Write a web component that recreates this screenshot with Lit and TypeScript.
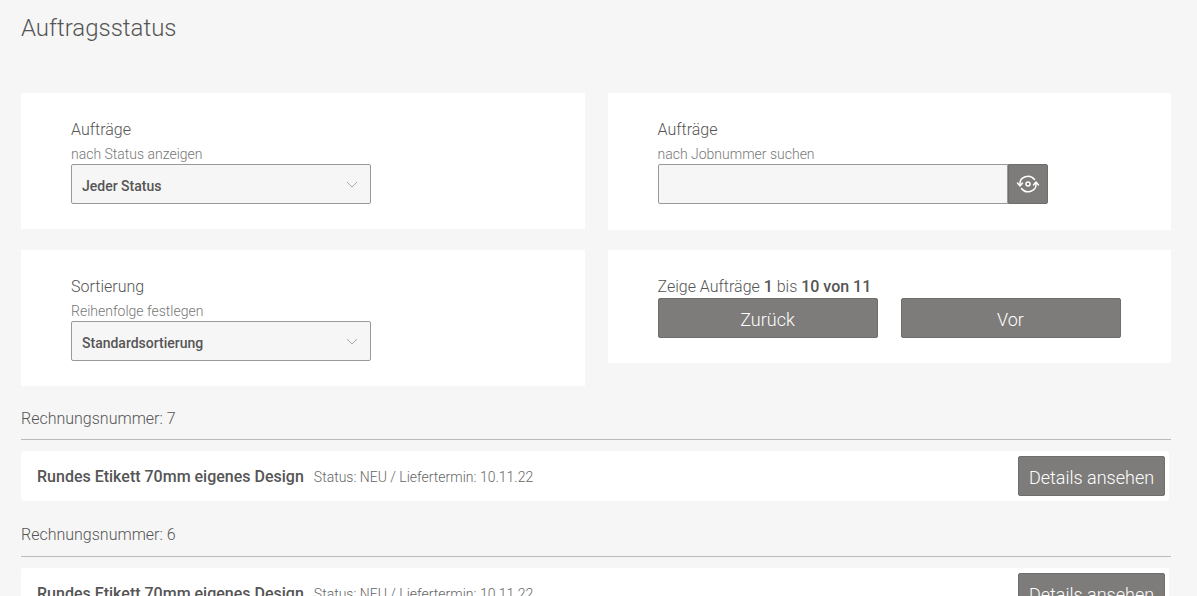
import { LitElement, html, css } from "lit";
import { customElement } from "lit/decorators.js";

const chevron = html`<svg class="chev" width="12" height="7" viewBox="0 0 12 7" fill="none" stroke="#a8a8a8" stroke-width="1"><path d="M1 1l5 5 5-5"/></svg>`;

@customElement("app-root")
export class AppRoot extends LitElement {
  static styles = css`
    :host { display: block; height: 596px; overflow: hidden; background: #f6f6f6; font-family: Roboto, sans-serif; color: #555; box-sizing: border-box; padding: 0 26px 0 21px; }
    * { box-sizing: border-box; }
    h1 { margin: 0; padding-top: 13px; height: 93px; font-size: 24px; line-height: 30px; font-weight: 300; color: #555; }
    .grid { display: grid; grid-template-columns: 564px 563.5px; column-gap: 22.5px; align-items: start; }
    .col { display: flex; flex-direction: column; }
    .left { gap: 21px; }
    .right { gap: 20px; }
    .card { background: #fff; padding: 27px 50px 0; }
    .h136 { height: 136px; }
    .h137 { height: 137px; }
    .h113 { height: 113px; }
    .title { font-size: 16px; line-height: 20px; font-weight: 300; color: #555; }
    .sub { font-size: 14px; line-height: 16px; margin-top: 6px; margin-bottom: 2px; font-weight: 300; color: #777; height: 16px; }
    .select { width: 300px; height: 40px; background: #f6f6f6; border: 1px solid #999; border-radius: 2px; display: flex; align-items: center; justify-content: space-between; padding: 4px 12px 0 10px; font-size: 14px; font-weight: 500; color: #555; }
    .chev { margin-top: -4px; }
    .search { display: flex; }
    .input { width: 350px; height: 40px; background: #f6f6f6; border: 1px solid #999; border-radius: 2px 0 0 2px; }
    .icon-btn { width: 40px; height: 40px; background: #7d7c7a; border: 1px solid #6f6e6c; border-radius: 0 2px 2px 0; display: flex; align-items: center; justify-content: center; padding-left: 1px; }
    .count { font-size: 16px; line-height: 20px; font-weight: 300; color: #555; margin-bottom: 1px; }
    .count b { font-weight: 500; }
    .pager { display: flex; gap: 23px; }
    .btn { background: #7d7c7a; border: 1px solid #6f6e6c; color: #fff; border-radius: 2px; height: 40px; padding-top: 2px; font-size: 18px; font-weight: 300; display: flex; align-items: center; justify-content: center; }
    .pager .btn { width: 220px; }
    .orders { margin-top: 23px; display: flex; flex-direction: column; }
    .inv { font-size: 16px; line-height: 20px; font-weight: 300; color: #555; height: 31px; border-bottom: 1px solid #bbb; width: 1150px; }
    .order { margin-top: 11px; width: 1148px; height: 50px; flex: none; background: #fff; border-radius: 3px; display: flex; align-items: center; padding: 0 4px 0 16px; }
    .order + .inv { margin-top: 24px; height: 32px; }
    .name { font-size: 16px; font-weight: 500; color: #555; }
    .meta { font-size: 14px; font-weight: 300; color: #666; margin-left: 10px; margin-top: 1px; }
    .order .btn { margin-left: auto; width: 147px; }
  `;

  private order(n: number) {
    return html`
      <div class="inv">Rechnungsnummer: ${n}</div>
      <div class="order">
        <span class="name">Rundes Etikett 70mm eigenes Design</span>
        <span class="meta">Status: NEU / Liefertermin: 10.11.22</span>
        <div class="btn">Details ansehen</div>
      </div>`;
  }

  render() {
    return html`
      <h1>Auftragsstatus</h1>
      <div class="grid">
        <div class="col left">
          <section class="card h136">
            <div class="title">Aufträge</div>
            <div class="sub">nach Status anzeigen</div>
            <div class="select"><span>Jeder Status</span>${chevron}</div>
          </section>
          <section class="card h136">
            <div class="title">Sortierung</div>
            <div class="sub">Reihenfolge festlegen</div>
            <div class="select"><span>Standardsortierung</span>${chevron}</div>
          </section>
        </div>
        <div class="col right">
          <section class="card h137">
            <div class="title">Aufträge</div>
            <div class="sub">nach Jobnummer suchen</div>
            <div class="search">
              <div class="input"></div>
              <div class="icon-btn">
                <svg width="24" height="18" viewBox="0 0 24 18" fill="none" stroke="#fff" stroke-width="1.5" stroke-linecap="round" stroke-linejoin="round">
                  <circle cx="12" cy="9" r="2"/>
                  <path d="M4 9.5A8 7.5 0 0 1 18.5 4.5"/>
                  <path d="M1.5 8l2.5 3 2.5-3"/>
                  <path d="M20 8.5A8 7.5 0 0 1 5.5 13.5"/>
                  <path d="M17.5 10l2.5-3 2.5 3"/>
                </svg>
              </div>
            </div>
          </section>
          <section class="card h113">
            <div class="count">Zeige Aufträge <b>1</b> bis <b>10 von 11</b></div>
            <div class="pager">
              <div class="btn">Zurück</div>
              <div class="btn">Vor</div>
            </div>
          </section>
        </div>
      </div>
      <div class="orders">${this.order(7)}${this.order(6)}</div>
    `;
  }
}
